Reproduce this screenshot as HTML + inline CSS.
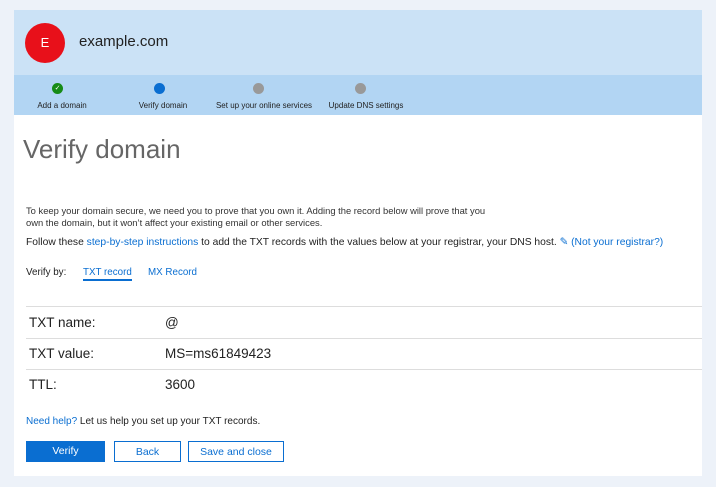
<!DOCTYPE html>
<html><head><style>
body{margin:0;width:716px;height:487px;background:#edf2f9;font-family:"Liberation Sans",sans-serif;position:relative;overflow:hidden;color:#222}
.a{position:absolute;white-space:nowrap}
.card{position:absolute;left:14px;top:10px;width:688px;height:466px;background:#fff}
.hd{position:absolute;left:14px;top:10px;width:688px;height:65px;background:#cbe2f6}
.st{position:absolute;left:14px;top:75px;width:688px;height:40px;background:#b2d5f3}
.dot{position:absolute;width:11px;height:11px;border-radius:50%}
.lab{font-size:8px;color:#222;transform:translateX(-50%)}
.ln{position:absolute;left:26px;width:676px;height:1px;background:#ddd}
.btn{position:absolute;top:441px;height:21px;box-sizing:border-box;font-size:10.5px;text-align:center;line-height:20px}
a{color:#0a6ed1}
</style></head><body>
<div class="card"></div>
<div class="hd"></div>
<div class="st"></div>
<div class="a" style="left:25px;top:23px;width:40px;height:40px;border-radius:50%;background:#e8101a;color:#fff;font-size:13px;text-align:center;line-height:40px">E</div>
<div class="a" style="left:79px;top:33px;font-size:15px;color:#222">example.com</div>
<div class="dot" style="left:52px;top:83px;background:#168b16;color:#fff;font-size:7px;text-align:center;line-height:11px">✓</div>
<div class="dot" style="left:154px;top:83px;background:#0a6ed1"></div>
<div class="dot" style="left:253px;top:83px;background:#999"></div>
<div class="dot" style="left:355px;top:83px;background:#999"></div>
<div class="a lab" style="left:62px;top:101px">Add a domain</div>
<div class="a lab" style="left:163px;top:101px">Verify domain</div>
<div class="a lab" style="left:264px;top:101px">Set up your online services</div>
<div class="a lab" style="left:366px;top:101px">Update DNS settings</div>
<div class="a" style="left:23px;top:134px;font-size:26px;color:#666">Verify domain</div>
<div class="a" style="left:26px;top:205px;font-size:9.4px;line-height:11.5px;color:#333">To keep your domain secure, we need you to prove that you own it. Adding the record below will prove that you<br>own the domain, but it won’t affect your existing email or other services.</div>
<div class="a" style="left:26px;top:236px;font-size:10.3px;color:#222">Follow these <a>step-by-step instructions</a> to add the TXT records with the values below at your registrar, your DNS host. <a>✎ (Not your registrar?)</a></div>
<div class="a" style="left:26px;top:267px;font-size:9.8px">Verify by:</div>
<div class="a" style="left:83px;top:267px;font-size:9.8px;color:#0a6ed1">TXT record</div>
<div class="a" style="left:83px;top:279px;width:49px;height:2px;background:#0a6ed1"></div>
<div class="a" style="left:148px;top:267px;font-size:9.8px;color:#0a6ed1">MX Record</div>
<div class="ln" style="top:306px"></div>
<div class="ln" style="top:338px"></div>
<div class="ln" style="top:369px"></div>
<div class="a" style="left:29px;top:315px;font-size:13.5px">TXT name:</div>
<div class="a" style="left:165px;top:315px;font-size:13.5px">@</div>
<div class="a" style="left:29px;top:346px;font-size:13.5px">TXT value:</div>
<div class="a" style="left:165px;top:346px;font-size:13.5px">MS=ms61849423</div>
<div class="a" style="left:29px;top:377px;font-size:13.5px">TTL:</div>
<div class="a" style="left:165px;top:377px;font-size:13.5px">3600</div>
<div class="a" style="left:26px;top:416px;font-size:10px"><a>Need help?</a> Let us help you set up your TXT records.</div>
<div class="btn" style="left:26px;width:79px;background:#0a6ed1;color:#fff">Verify</div>
<div class="btn" style="left:114px;width:67px;border:1px solid #0a6ed1;color:#0a6ed1">Back</div>
<div class="btn" style="left:188px;width:96px;border:1px solid #0a6ed1;color:#0a6ed1">Save and close</div>
</body></html>
